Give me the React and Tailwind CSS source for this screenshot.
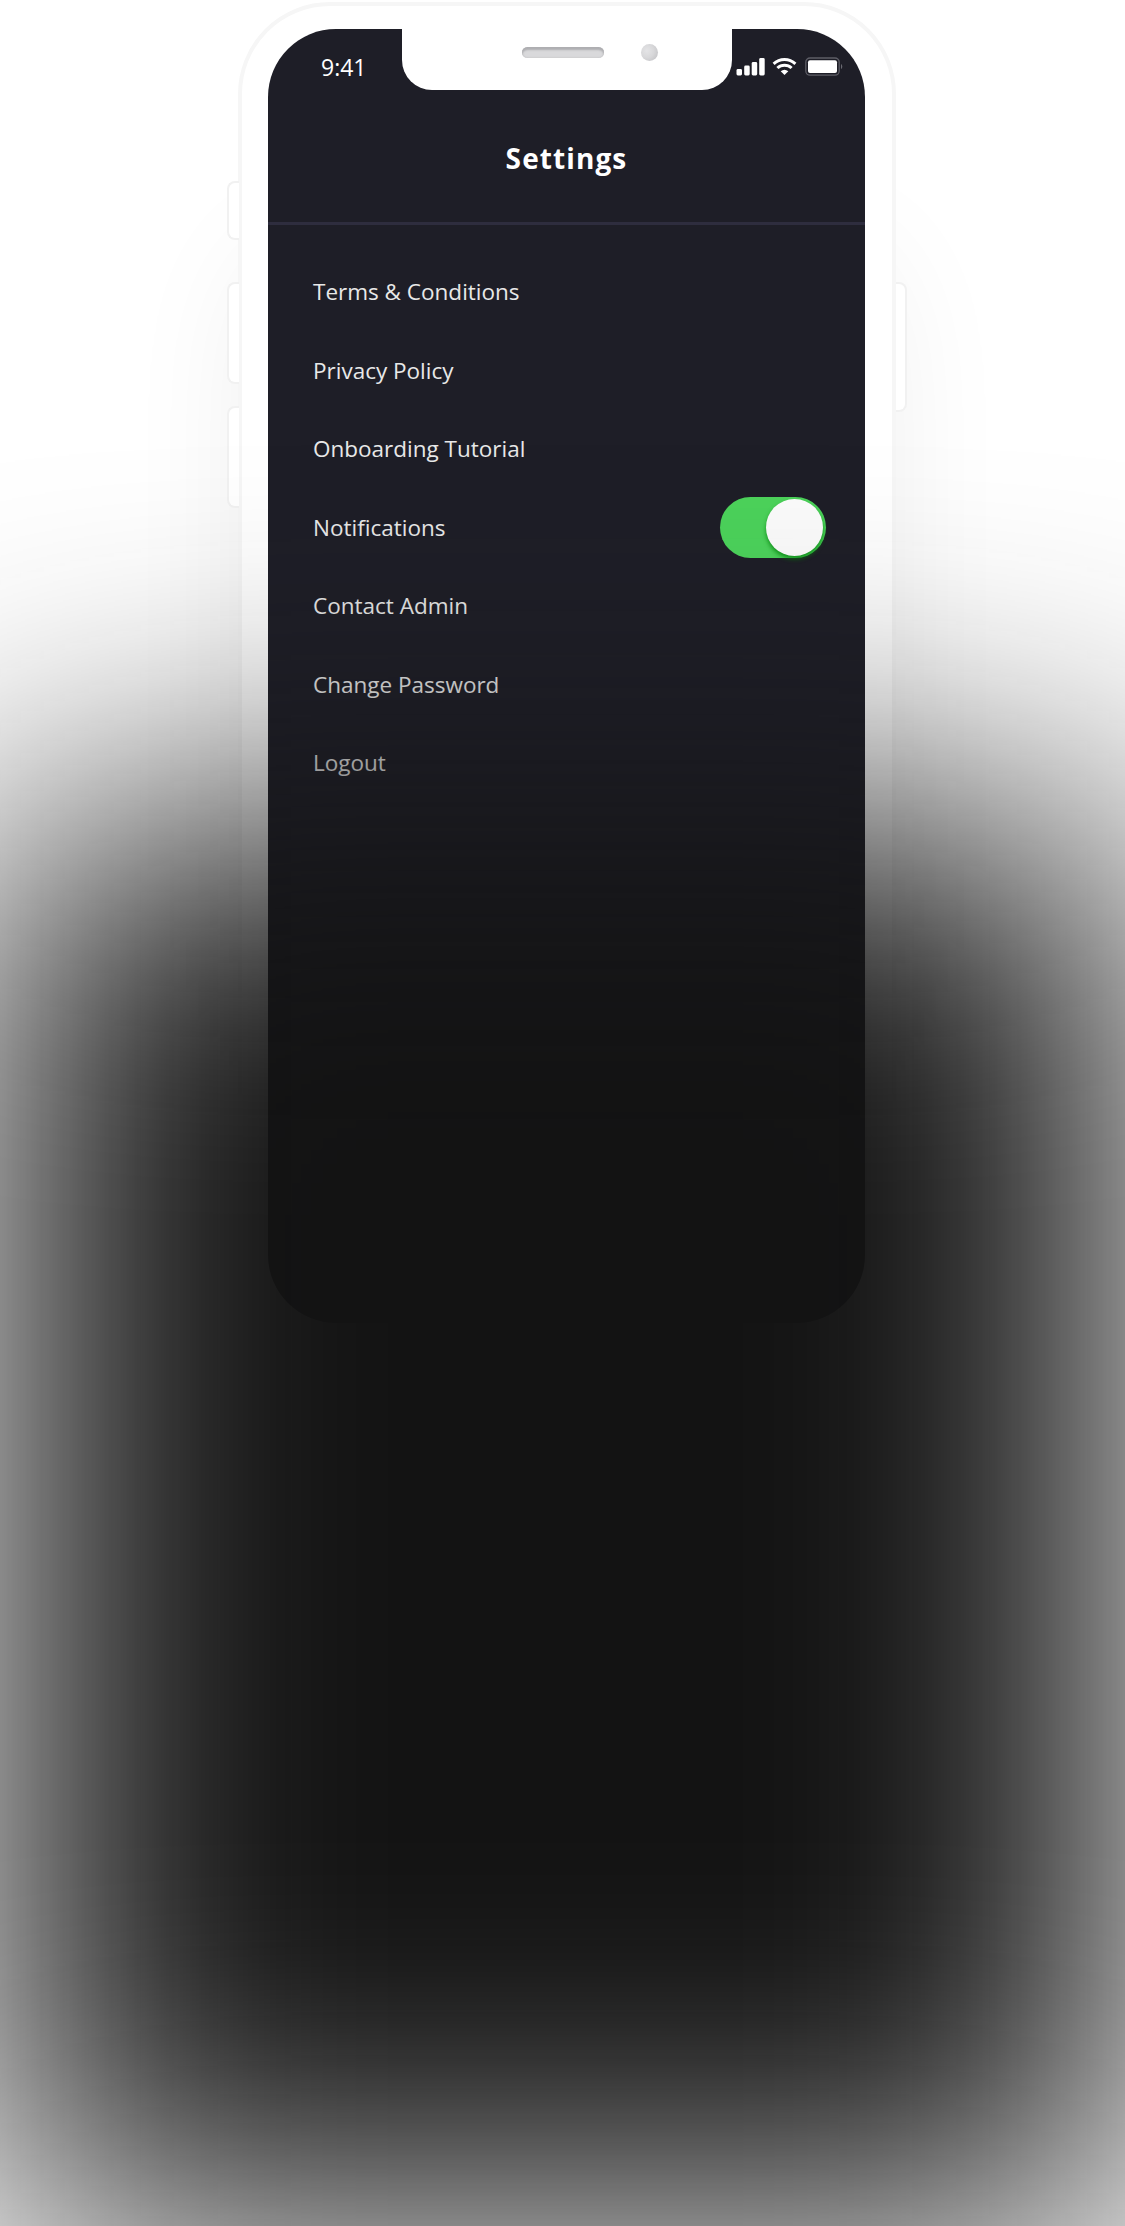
const items = [
  "Terms & Conditions",
  "Privacy Policy",
  "Onboarding Tutorial",
  "Notifications",
  "Contact Admin",
  "Change Password",
  "Logout",
];

function LeftKey({ className }) {
  return <div className={`w-[12px] rounded-l-[8px] border-2 border-r-0 border-[#f1f1f1] bg-white ${className}`} />;
}

function Toggle() {
  return (
    <div role="switch" aria-checked="true" className="flex h-[61px] w-[106px] items-center justify-end rounded-full bg-[#4cd35b] pr-[3px]">
      <div className="h-[57px] w-[57px] rounded-full bg-[#fcfcfc] shadow-[0_3px_4px_rgba(0,130,10,0.75)]" />
    </div>
  );
}

function StatusIcons() {
  return (
    <svg width="133" height="30" viewBox="0 0 133 30" className="mt-[21px]" fill="none">
      <g fill="#fff">
        <rect x="4.5" y="19" width="5.5" height="6.5" rx="1.4" />
        <rect x="12.2" y="15.5" width="5.5" height="10" rx="1.4" />
        <rect x="19.7" y="12" width="5.5" height="13.5" rx="1.4" />
        <rect x="27.2" y="8" width="5.5" height="17.5" rx="1.4" />
        <path d="M52.5 25 L48.7 21.2 Q52.5 18.2 56.3 21.2 Z" />
      </g>
      <g stroke="#fff" strokeWidth="3">
        <path d="M41.6 13.8 A16 16 0 0 1 63.4 13.8" />
        <path d="M45.4 18 A10.3 10.3 0 0 1 59.6 18" />
      </g>
      <rect x="73.8" y="8" width="33.4" height="17.2" rx="4.2" stroke="#5d5d66" strokeWidth="1.3" />
      <rect x="76" y="10.2" width="29" height="12.8" rx="2" fill="#fff" />
      <path d="M109 13.7 Q111.6 16.5 109 19.3 Z" fill="#6a6a72" />
    </svg>
  );
}

function StatusBar() {
  return (
    <div className="flex h-[61px] items-start text-left">
      <span className="w-[134px] pl-[53px] pt-[22px] text-[23px] leading-8 text-white">9:41</span>
      <div className="flex h-[61px] w-[330px] items-start rounded-b-[30px] bg-white pl-[120px] pt-[15px]">
        <div className="mt-[3px] h-[11px] w-[82px] rounded-full bg-[#d9d9db] shadow-[inset_0_3px_2px_#aeaeb1,inset_0_0_2px_#b9b9bc]" />
        <div className="ml-[37px] h-[17px] w-[17px] rounded-full bg-[radial-gradient(circle_at_35%_40%,#e4e4e6,#d8d8da_45%,#bdbdc0)]" />
      </div>
      <StatusIcons />
    </div>
  );
}

export default function App() {
  return (
    <div className="relative flex h-[2226px] w-[1125px] items-start overflow-hidden bg-white pl-[227px] pt-[2px] font-['Open_Sans',sans-serif]">
      <div className="relative z-10 flex w-[11px] flex-col pt-[179px]">
        <LeftKey className="h-[59px]" />
        <LeftKey className="mt-[42px] h-[102px]" />
        <LeftKey className="mt-[22px] h-[102px]" />
      </div>
      <div className="relative flex h-[1346px] w-[658px] rounded-[92px] border-[4px] border-[#f6f6f6] bg-white pl-[26px] pt-[23px] shadow-[0_235px_130px_-10px_rgba(0,0,0,0.07)]">
        <div className="h-[1294px] w-[597px] overflow-hidden rounded-[68px] bg-[#1e1e27]">
          <header className="h-[196px] border-b-[3px] border-[#2e2d3e] text-center">
            <StatusBar />
            <h1 className="pt-[49px] text-[28px] leading-[38px] font-bold tracking-[1.1px] text-white">Settings</h1>
          </header>
          <ul className="flex flex-col pl-[45px] pr-[39px] pt-[28px]">
            {items.map((item) => (
              <li key={item} className="flex h-[78.5px] items-center justify-between text-[22.5px] text-[#e8e8e8]">
                <span>{item}</span>
                {item === "Notifications" && <Toggle />}
              </li>
            ))}
          </ul>
        </div>
      </div>
      <div className="relative z-10 flex w-[11px] flex-col pt-[280px]">
        <div className="h-[130px] w-[11px] rounded-r-[8px] border-2 border-l-0 border-[#f1f1f1] bg-white" />
      </div>
      <div className="absolute left-0 top-[828px] z-20 h-[1402px] w-[1130px] bg-[#131313] blur-[160px]" />
    </div>
  );
}
